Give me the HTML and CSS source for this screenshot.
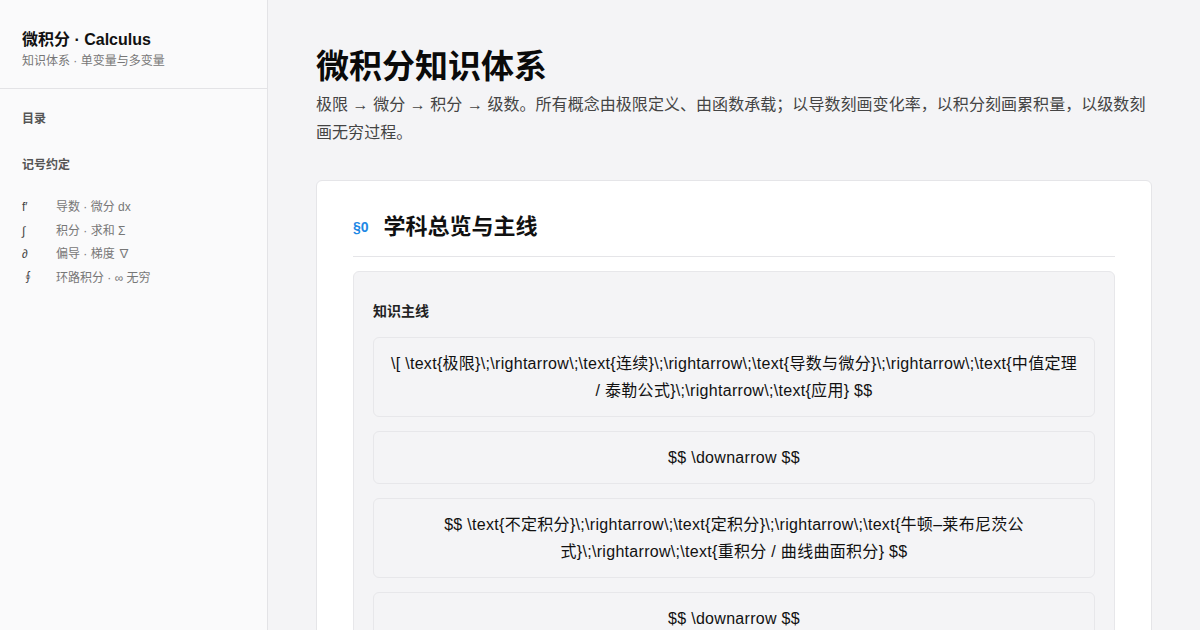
FILE: index.html
```html
<!DOCTYPE html>
<html lang="zh">
<head>
<meta charset="utf-8">
<title>微积分 · Calculus</title>
<link rel="stylesheet" href="styles.css">
</head>
<body>
<div class="layout">
  <aside class="sidebar">
    <div class="brand">
      <div class="brand-title">微积分 · Calculus</div>
      <div class="brand-sub">知识体系 · 单变量与多变量</div>
    </div>
    <div class="side-body">
      <div class="side-label">目录</div>
      <div class="side-label notation">记号约定</div>
      <ul class="symbols">
        <li><span class="sym">f′</span><span class="desc">导数 · 微分 dx</span></li>
        <li><span class="sym">∫</span><span class="desc">积分 · 求和 Σ</span></li>
        <li><span class="sym">∂</span><span class="desc">偏导 · 梯度 ∇</span></li>
        <li><span class="sym">∮</span><span class="desc">环路积分 · ∞ 无穷</span></li>
      </ul>
    </div>
  </aside>
  <main class="main">
    <h1 class="page-title">微积分知识体系</h1>
    <p class="lead">极限 → 微分 → 积分 → 级数。所有概念由极限定义、由函数承载；以导数刻画变化率，以积分刻画累积量，以级数刻画无穷过程。</p>
    <section class="card">
      <h2 class="sec-title"><span class="sec-num">§0</span>学科总览与主线</h2>
      <div class="panel">
        <h3 class="panel-title">知识主线</h3>
        <div class="math">\[ \text{极限}\;\rightarrow\;\text{连续}\;\rightarrow\;\text{导数与微分}\;\rightarrow\;\text{中值定理 / 泰勒公式}\;\rightarrow\;\text{应用} $$</div>
        <div class="math">$$ \downarrow $$</div>
        <div class="math">$$ \text{不定积分}\;\rightarrow\;\text{定积分}\;\rightarrow\;\text{牛顿–莱布尼茨公式}\;\rightarrow\;\text{重积分 / 曲线曲面积分} $$</div>
        <div class="math">$$ \downarrow $$</div>
      </div>
    </section>
  </main>
</div>
</body>
</html>
```
FILE: styles.css
```css
* { box-sizing: border-box; }
html, body { margin: 0; padding: 0; height: 100%; }
body {
  font-family: "Liberation Sans", "Noto Sans CJK SC", sans-serif;
  color: #111;
  background: #f4f4f6;
  overflow: hidden;
}
.layout { display: flex; height: 630px; }
.sidebar {
  width: 268px;
  flex: none;
  background: #fafafb;
  border-right: 1px solid #e3e3e6;
}
.brand {
  padding: 29px 22px 18px;
  border-bottom: 1px solid #e3e3e6;
}
.brand-title { font-size: 16px; font-weight: 700; line-height: 22px; color: #111; }
.brand-sub { font-size: 12px; color: #777; line-height: 18px; margin-top: 1px; }
.side-body { padding: 21px 22px; }
.side-label { font-size: 12px; font-weight: 700; color: #555; line-height: 18px; }
.side-label.notation { margin-top: 28px; }
.symbols { list-style: none; margin: 22px 0 0; padding: 0; }
.symbols li { display: flex; font-size: 12px; line-height: 23.5px; color: #777; }
.sym { width: 34px; color: #444; }
.main { flex: 1; padding: 45px 48px 0; min-width: 0; }
.page-title { font-size: 33px; font-weight: 700; margin: 0; line-height: 44px; color: #0a0a0a; }
.lead { font-size: 16px; line-height: 28px; color: #444; margin: 2px 0 0; letter-spacing: 0.05px; }
.card {
  margin-top: 33px;
  background: #fff;
  border: 1px solid #e5e5e8;
  border-radius: 6px;
  padding: 28px 36px;
}
.sec-title {
  margin: 0;
  font-size: 22px;
  font-weight: 700;
  line-height: 36px;
  padding-bottom: 11px;
  border-bottom: 1px solid #e5e5e8;
  display: flex;
  align-items: center;
}
.sec-num { color: #1e88e5; font-size: 14px; margin-right: 15px; }
.panel {
  margin-top: 14px;
  background: #f4f4f6;
  border: 1px solid #e7e7ea;
  border-radius: 6px;
  padding: 27px 19px;
}
.panel-title { margin: 0 0 14px; font-size: 14px; font-weight: 700; line-height: 24px; color: #222; }
.math {
  border: 1px solid #e7e7ea;
  border-radius: 6px;
  padding: 12px 16px;
  text-align: center;
  font-size: 16px;
  line-height: 27px;
  letter-spacing: 0.3px;
  color: #111;
  margin-bottom: 14px;
}
```
